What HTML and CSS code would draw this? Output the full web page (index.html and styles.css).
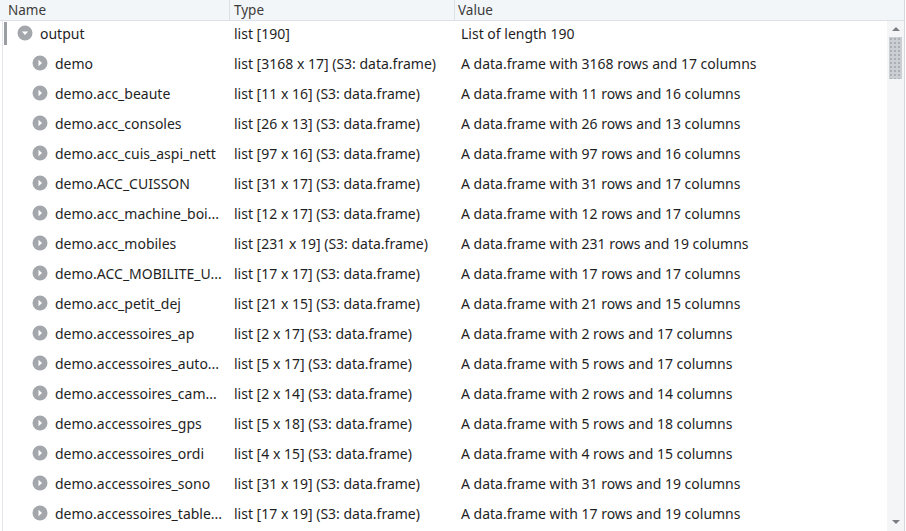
FILE: index.html
```html
<!DOCTYPE html>
<html>
<head>
<meta charset="utf-8">
<link rel="stylesheet" href="styles.css">
</head>
<body>
<div class="tree">
  <div class="header">
    <div class="hcell c-name">Name</div>
    <div class="hcell c-type">Type</div>
    <div class="hcell c-value">Value</div>
  </div>
  <div class="main">
    <div class="rows">
      <div class="row selected">
        <div class="cell c-name lvl0"><svg class="ico" viewBox="0 0 16 16"><circle cx="8" cy="8" r="7.5" fill="#a3a7ab"/><path d="M4.8 6.5 L11.2 6.5 L8 10 Z" fill="#fff"/></svg><span>output</span></div>
        <div class="cell c-type">list [190]</div>
        <div class="cell c-value">List of length 190</div>
      </div>
      <div class="row"><div class="cell c-name lvl1"><svg class="ico" viewBox="0 0 16 16"><circle cx="8" cy="8" r="7.5" fill="#a3a7ab"/><path d="M6.5 4.8 L10 8 L6.5 11.2 Z" fill="#fff"/></svg><span>demo</span></div><div class="cell c-type">list [3168 x 17] (S3: data.frame)</div><div class="cell c-value">A data.frame with 3168 rows and 17 columns</div></div>
      <div class="row"><div class="cell c-name lvl1"><svg class="ico" viewBox="0 0 16 16"><circle cx="8" cy="8" r="7.5" fill="#a3a7ab"/><path d="M6.5 4.8 L10 8 L6.5 11.2 Z" fill="#fff"/></svg><span>demo.acc_beaute</span></div><div class="cell c-type">list [11 x 16] (S3: data.frame)</div><div class="cell c-value">A data.frame with 11 rows and 16 columns</div></div>
      <div class="row"><div class="cell c-name lvl1"><svg class="ico" viewBox="0 0 16 16"><circle cx="8" cy="8" r="7.5" fill="#a3a7ab"/><path d="M6.5 4.8 L10 8 L6.5 11.2 Z" fill="#fff"/></svg><span>demo.acc_consoles</span></div><div class="cell c-type">list [26 x 13] (S3: data.frame)</div><div class="cell c-value">A data.frame with 26 rows and 13 columns</div></div>
      <div class="row"><div class="cell c-name lvl1"><svg class="ico" viewBox="0 0 16 16"><circle cx="8" cy="8" r="7.5" fill="#a3a7ab"/><path d="M6.5 4.8 L10 8 L6.5 11.2 Z" fill="#fff"/></svg><span>demo.acc_cuis_aspi_nett</span></div><div class="cell c-type">list [97 x 16] (S3: data.frame)</div><div class="cell c-value">A data.frame with 97 rows and 16 columns</div></div>
      <div class="row"><div class="cell c-name lvl1"><svg class="ico" viewBox="0 0 16 16"><circle cx="8" cy="8" r="7.5" fill="#a3a7ab"/><path d="M6.5 4.8 L10 8 L6.5 11.2 Z" fill="#fff"/></svg><span>demo.ACC_CUISSON</span></div><div class="cell c-type">list [31 x 17] (S3: data.frame)</div><div class="cell c-value">A data.frame with 31 rows and 17 columns</div></div>
      <div class="row"><div class="cell c-name lvl1"><svg class="ico" viewBox="0 0 16 16"><circle cx="8" cy="8" r="7.5" fill="#a3a7ab"/><path d="M6.5 4.8 L10 8 L6.5 11.2 Z" fill="#fff"/></svg><span>demo.acc_machine_boi...</span></div><div class="cell c-type">list [12 x 17] (S3: data.frame)</div><div class="cell c-value">A data.frame with 12 rows and 17 columns</div></div>
      <div class="row"><div class="cell c-name lvl1"><svg class="ico" viewBox="0 0 16 16"><circle cx="8" cy="8" r="7.5" fill="#a3a7ab"/><path d="M6.5 4.8 L10 8 L6.5 11.2 Z" fill="#fff"/></svg><span>demo.acc_mobiles</span></div><div class="cell c-type">list [231 x 19] (S3: data.frame)</div><div class="cell c-value">A data.frame with 231 rows and 19 columns</div></div>
      <div class="row"><div class="cell c-name lvl1"><svg class="ico" viewBox="0 0 16 16"><circle cx="8" cy="8" r="7.5" fill="#a3a7ab"/><path d="M6.5 4.8 L10 8 L6.5 11.2 Z" fill="#fff"/></svg><span>demo.ACC_MOBILITE_U...</span></div><div class="cell c-type">list [17 x 17] (S3: data.frame)</div><div class="cell c-value">A data.frame with 17 rows and 17 columns</div></div>
      <div class="row"><div class="cell c-name lvl1"><svg class="ico" viewBox="0 0 16 16"><circle cx="8" cy="8" r="7.5" fill="#a3a7ab"/><path d="M6.5 4.8 L10 8 L6.5 11.2 Z" fill="#fff"/></svg><span>demo.acc_petit_dej</span></div><div class="cell c-type">list [21 x 15] (S3: data.frame)</div><div class="cell c-value">A data.frame with 21 rows and 15 columns</div></div>
      <div class="row"><div class="cell c-name lvl1"><svg class="ico" viewBox="0 0 16 16"><circle cx="8" cy="8" r="7.5" fill="#a3a7ab"/><path d="M6.5 4.8 L10 8 L6.5 11.2 Z" fill="#fff"/></svg><span>demo.accessoires_ap</span></div><div class="cell c-type">list [2 x 17] (S3: data.frame)</div><div class="cell c-value">A data.frame with 2 rows and 17 columns</div></div>
      <div class="row"><div class="cell c-name lvl1"><svg class="ico" viewBox="0 0 16 16"><circle cx="8" cy="8" r="7.5" fill="#a3a7ab"/><path d="M6.5 4.8 L10 8 L6.5 11.2 Z" fill="#fff"/></svg><span>demo.accessoires_auto...</span></div><div class="cell c-type">list [5 x 17] (S3: data.frame)</div><div class="cell c-value">A data.frame with 5 rows and 17 columns</div></div>
      <div class="row"><div class="cell c-name lvl1"><svg class="ico" viewBox="0 0 16 16"><circle cx="8" cy="8" r="7.5" fill="#a3a7ab"/><path d="M6.5 4.8 L10 8 L6.5 11.2 Z" fill="#fff"/></svg><span>demo.accessoires_cam...</span></div><div class="cell c-type">list [2 x 14] (S3: data.frame)</div><div class="cell c-value">A data.frame with 2 rows and 14 columns</div></div>
      <div class="row"><div class="cell c-name lvl1"><svg class="ico" viewBox="0 0 16 16"><circle cx="8" cy="8" r="7.5" fill="#a3a7ab"/><path d="M6.5 4.8 L10 8 L6.5 11.2 Z" fill="#fff"/></svg><span>demo.accessoires_gps</span></div><div class="cell c-type">list [5 x 18] (S3: data.frame)</div><div class="cell c-value">A data.frame with 5 rows and 18 columns</div></div>
      <div class="row"><div class="cell c-name lvl1"><svg class="ico" viewBox="0 0 16 16"><circle cx="8" cy="8" r="7.5" fill="#a3a7ab"/><path d="M6.5 4.8 L10 8 L6.5 11.2 Z" fill="#fff"/></svg><span>demo.accessoires_ordi</span></div><div class="cell c-type">list [4 x 15] (S3: data.frame)</div><div class="cell c-value">A data.frame with 4 rows and 15 columns</div></div>
      <div class="row"><div class="cell c-name lvl1"><svg class="ico" viewBox="0 0 16 16"><circle cx="8" cy="8" r="7.5" fill="#a3a7ab"/><path d="M6.5 4.8 L10 8 L6.5 11.2 Z" fill="#fff"/></svg><span>demo.accessoires_sono</span></div><div class="cell c-type">list [31 x 19] (S3: data.frame)</div><div class="cell c-value">A data.frame with 31 rows and 19 columns</div></div>
      <div class="row"><div class="cell c-name lvl1"><svg class="ico" viewBox="0 0 16 16"><circle cx="8" cy="8" r="7.5" fill="#a3a7ab"/><path d="M6.5 4.8 L10 8 L6.5 11.2 Z" fill="#fff"/></svg><span>demo.accessoires_table...</span></div><div class="cell c-type">list [17 x 19] (S3: data.frame)</div><div class="cell c-value">A data.frame with 17 rows and 19 columns</div></div>
    </div>
    <div class="scrollbar">
      <div class="arrow up"></div>
      <div class="thumb"></div>
      <div class="track"></div>
      <div class="arrow down"></div>
    </div>
  </div>
</div>
</body>
</html>
```

FILE: styles.css
```css
html, body {
  margin: 0;
  padding: 0;
  background: #fff;
}
body {
  width: 906px;
  height: 531px;
  overflow: hidden;
  font-family: "Noto Sans", "Open Sans", sans-serif;
  font-size: 14px;
  color: #1f1f1f;
}
.tree {
  width: 905px;
  height: 531px;
  display: flex;
  flex-direction: column;
  border-right: 1px solid #d4d8dd;
  box-sizing: border-box;
}
.header {
  height: 21px;
  display: grid;
  grid-template-columns: 229px 225px 1fr;
  background: #f3f6f8;
  border-bottom: 1px solid #dde1e6;
  box-sizing: border-box;
  flex-shrink: 0;
}
.hcell {
  line-height: 20px;
  color: #3c3c3c;
  font-size: 13.5px;
  white-space: nowrap;
}
.hcell.c-name { padding-left: 8px; }
.hcell.c-type { padding-left: 4px; border-left: 1px solid #dde1e6; }
.hcell.c-value { padding-left: 3px; border-left: 1px solid #dde1e6; }
.main {
  flex: 1;
  display: flex;
  min-height: 0;
  border-left: 1px solid #e2e5e9;
  margin-left: 2px;
}
.rows {
  flex: 1;
  display: flex;
  flex-direction: column;
}
.row {
  height: 30px;
  box-sizing: border-box;
  padding-bottom: 6px;
  display: grid;
  grid-template-columns: 226px 227px 1fr;
  align-items: center;
  white-space: nowrap;
  position: relative;
  flex-shrink: 0;
}
.row.selected::before {
  content: "";
  position: absolute;
  left: 1px;
  top: 1px;
  width: 3px;
  height: 23px;
  background: #9a9ea3;
}
.cell {
  display: flex;
  align-items: center;
  overflow: hidden;
}
.cell.lvl0 { padding-left: 14px; }
.cell.lvl1 { padding-left: 29px; }
.ico {
  width: 16px;
  height: 16px;
  margin-right: 7px;
  flex-shrink: 0;
}
.cell.c-type { padding-left: 5px; }
.cell.c-value { padding-left: 5px; }
.scrollbar {
  width: 17px;
  background: #f3f5f7;
  display: flex;
  flex-direction: column;
  align-items: center;
}
.arrow {
  width: 0;
  height: 0;
  border-left: 4px solid transparent;
  border-right: 4px solid transparent;
  margin-top: 6px;
}
.arrow.up {
  border-bottom: 4px solid #7a7e83;
}
.thumb {
  width: 13px;
  height: 42px;
  margin-top: 6px;
  background-color: #cbced3;
  background-image: radial-gradient(#a9adb3 0.7px, transparent 0.8px);
  background-size: 4px 4px;
}
.track { flex: 1; }
.arrow.down {
  border-top: 4px solid #7a7e83;
  margin-bottom: 7px;
}
```
